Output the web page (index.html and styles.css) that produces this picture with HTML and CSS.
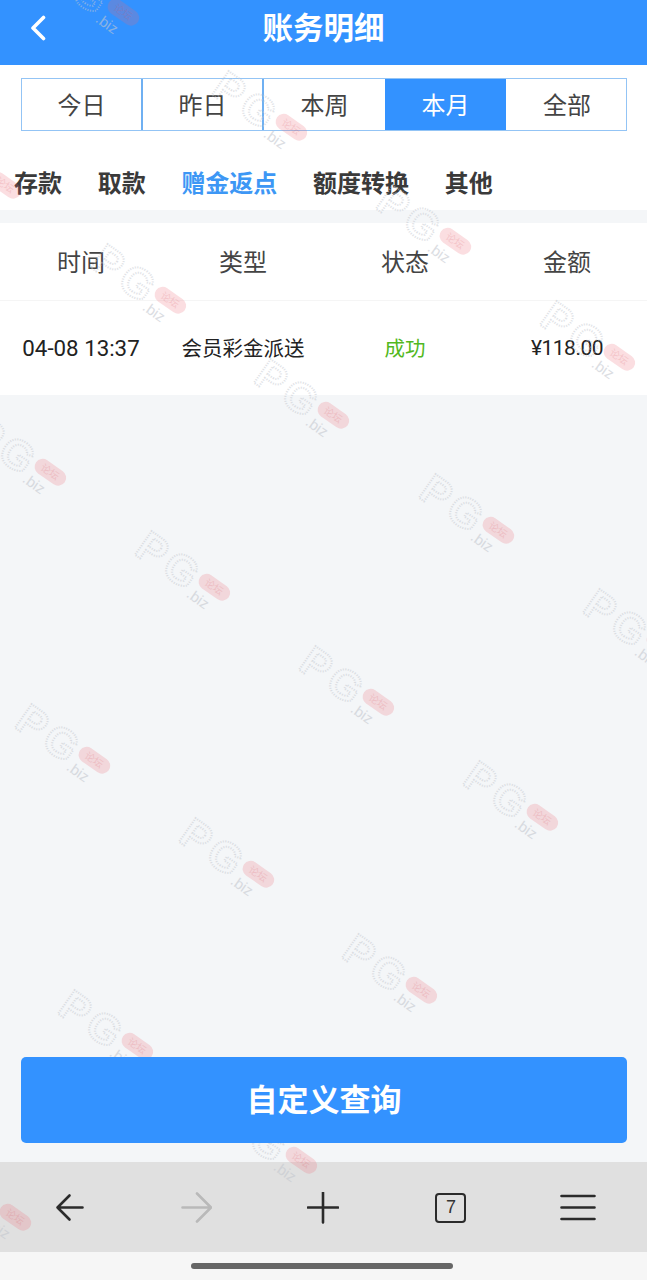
FILE: index.html
```html
<!DOCTYPE html>
<html lang="zh-CN">
<head>
<meta charset="utf-8">
<title>账务明细</title>
<link rel="stylesheet" href="styles.css">
</head>
<body>
<div class="page">
  <header class="header">
    <svg class="back" width="16" height="26" viewBox="0 0 16 26" aria-hidden="true"><path d="M13.5 2.5 3 13l10.5 10.500"/></svg>
    <h1 class="title">账务明细</h1>
  </header>
  <section class="filters">
    <div class="ranges">
      <div class="range">今日</div>
      <div class="range">昨日</div>
      <div class="range before-active">本周</div>
      <div class="range active">本月</div>
      <div class="range last">全部</div>
    </div>
    <nav class="types">
      <span class="type">存款</span>
      <span class="type">取款</span>
      <span class="type current">赠金返点</span>
      <span class="type">额度转换</span>
      <span class="type">其他</span>
    </nav>
  </section>
  <section class="table">
    <div class="row head">
      <div>时间</div><div>类型</div><div>状态</div><div>金额</div>
    </div>
    <div class="row body-row">
      <div class="time">04-08 13:37</div><div>会员彩金派送</div><div class="ok">成功</div><div class="amount">¥118.00</div>
    </div>
  </section>
  <div class="spacer"></div>
  <button class="query" type="button">自定义查询</button>
  <footer class="toolbar">
    <div class="tool"><svg width="32" height="32" viewBox="0 0 32 32" aria-hidden="true"><path class="ic" d="M4.500 15.500h25M16.500 3.500l-12 12 12 12"/></svg></div>
    <div class="tool"><svg width="32" height="32" viewBox="0 0 32 32" aria-hidden="true"><path class="ic off" d="M2.500 15.500h28M17 1.500l14 14-14 14"/></svg></div>
    <div class="tool"><svg width="32" height="32" viewBox="0 0 32 32" aria-hidden="true"><path class="ic" d="M1 15.500h30M16 0.500v30"/></svg></div>
    <div class="tool"><div class="tabs-count">7</div></div>
    <div class="tool"><svg width="36" height="32" viewBox="0 0 36 32" aria-hidden="true"><path class="ic" d="M1.500 4h33M1.500 15.500h33M1.500 27h33"/></svg></div>
  </footer>
  <div class="home"><div class="home-bar"></div></div>
</div>
<svg class="marks" width="647" height="1280" viewBox="0 0 647 1280" aria-hidden="true">
  <defs>
    <g id="mark" transform="rotate(35)">
      <text class="mark-pg" x="-86" y="19">PG</text>
      <text class="mark-biz" x="-18" y="24">.biz</text>
      <rect class="mark-pill" x="-17" y="-8" width="35" height="16" rx="8"/>
      <text class="mark-cn" x="0" y="3.500" text-anchor="middle">论坛</text>
    </g>
  </defs>
  <use href="#mark" transform="translate(123 12)"/>
  <use href="#mark" transform="translate(291 127)"/>
  <use href="#mark" transform="translate(455 241)"/>
  <use href="#mark" transform="translate(619 357)"/>
  <use href="#mark" transform="translate(5 185)"/>
  <use href="#mark" transform="translate(170 300)"/>
  <use href="#mark" transform="translate(333 415)"/>
  <use href="#mark" transform="translate(498 530)"/>
  <use href="#mark" transform="translate(662 645)"/>
  <use href="#mark" transform="translate(50 472)"/>
  <use href="#mark" transform="translate(214 587)"/>
  <use href="#mark" transform="translate(378 702)"/>
  <use href="#mark" transform="translate(542 817)"/>
  <use href="#mark" transform="translate(94 760)"/>
  <use href="#mark" transform="translate(258 874)"/>
  <use href="#mark" transform="translate(421 990)"/>
  <use href="#mark" transform="translate(137 1046)"/>
  <use href="#mark" transform="translate(301 1160)"/>
  <use href="#mark" transform="translate(15 1217)"/>
</svg>
</body>
</html>
```
FILE: styles.css
```css
* { box-sizing: border-box; }
html, body { margin: 0; padding: 0; height: 1280px; overflow: hidden; }
body {
  position: relative;
  font-family: "Noto Sans CJK SC", "Noto Sans", sans-serif;
  color: #333;
  background: #f4f6f8;
}
.page { display: flex; flex-direction: column; height: 1280px; }

.header {
  position: relative;
  flex: none;
  height: 65px;
  background: #3392ff;
  display: flex;
  align-items: center;
  justify-content: center;
  padding-bottom: 13px;
}
.back { position: absolute; left: 30px; top: 15px; }
.back path { fill: none; stroke: #fff; stroke-width: 3.600; stroke-linecap: round; stroke-linejoin: round; }
.title { margin: 0; font-size: 30.500px; line-height: 42px; font-weight: 700; color: #fff; }

.filters { flex: none; height: 145px; background: #fff; padding-top: 13px; }
.ranges {
  display: grid;
  grid-template-columns: 121px 121px 121px 121px 1fr;
  height: 53px;
  margin: 0 20px 0 21px;
  border: 1px solid #93c4f5;
}
.range {
  display: flex;
  align-items: center;
  justify-content: center;
  padding-bottom: 3px;
  font-size: 24px;
  color: #444;
  border-right: 2px solid #6fb0f2;
  background: #fff;
}
.range.before-active { border-right: 0; }
.range.last { border-right: 0; padding-left: 2px; }
.range.active { background: #3392ff; color: #fff; border-right: 0; }
.types {
  display: flex;
  gap: 35.700px;
  padding: 25px 0 0 14px;
}
.type { font-size: 24px; line-height: 54px; height: 54px; font-weight: 700; color: #3a3a3a; margin-top: -1px; }
.type.current { color: #3d97f5; }

.table { flex: none; margin-top: 13px; background: #fff; }
.row { display: grid; grid-template-columns: repeat(4, 162px); text-align: center; }
.row > div { display: flex; align-items: center; justify-content: center; white-space: nowrap; }
.head { height: 78px; padding-bottom: 2px; font-size: 24px; color: #444; border-bottom: 1px solid #f5f5f5; }
.body-row { height: 94px; padding-bottom: 2px; font-size: 20.500px; color: #222; }
.time { padding-top: 2px; font-family: Roboto, "Noto Sans CJK SC", sans-serif; font-size: 22.300px; }
.amount { padding-top: 2px; font-family: Roboto, "Noto Sans CJK SC", sans-serif; font-size: 21px; letter-spacing: -0.500px; }
.ok { color: #52b81e; }

.spacer { flex: 1; }
.query {
  position: relative;
  z-index: 2;
  flex: none;
  display: block;
  width: 606px;
  height: 86px;
  margin: 0 0 19px 21px;
  padding: 0 0 5px;
  border: 0;
  border-radius: 5px;
  background: #3392ff;
  color: #fff;
  font-family: inherit;
  font-size: 31px;
  font-weight: 700;
}

.toolbar {
  flex: none;
  height: 90px;
  padding: 0 5px;
  display: grid;
  grid-template-columns: repeat(5, 1fr);
  background: #e0e0e0;
}
.tool { display: flex; align-items: center; justify-content: center; padding-top: 1px; }
.ic { fill: none; stroke: #2b2b2b; stroke-width: 2.600; stroke-linecap: round; stroke-linejoin: round; }
.ic.off { stroke: #b9b9b9; }
.tabs-count {
  width: 31px;
  height: 30px;
  border: 2.500px solid #2b2b2b;
  border-radius: 4px;
  display: flex;
  align-items: center;
  justify-content: center;
  font-family: "Liberation Sans", sans-serif;
  font-size: 18px;
  color: #333;
}

.home { flex: none; height: 28px; background: #f6f6f6; display: flex; justify-content: center; padding: 11px 4px 0 0; }
.home-bar { width: 262px; height: 6px; border-radius: 3px; background: #666; }

.marks { position: absolute; left: 0; top: 0; z-index: 1; pointer-events: none; }
.mark-pg {
  font-family: "Liberation Sans", sans-serif;
  font-size: 42px;
  font-weight: 700;
  letter-spacing: 5px;
  fill: none;
  stroke: #c4c8cf;
  stroke-width: 2;
  stroke-dasharray: 1 1.500;
  opacity: .55;
}
.mark-biz {
  font-family: "Liberation Sans", sans-serif;
  font-size: 15px;
  fill: #c4c8cf;
  opacity: .6;
}
.mark-pill { fill: #ee6a78; opacity: .22; }
.mark-cn {
  font-family: "Noto Sans CJK SC", sans-serif;
  font-size: 10px;
  fill: #d85a66;
  opacity: .2;
}
```
